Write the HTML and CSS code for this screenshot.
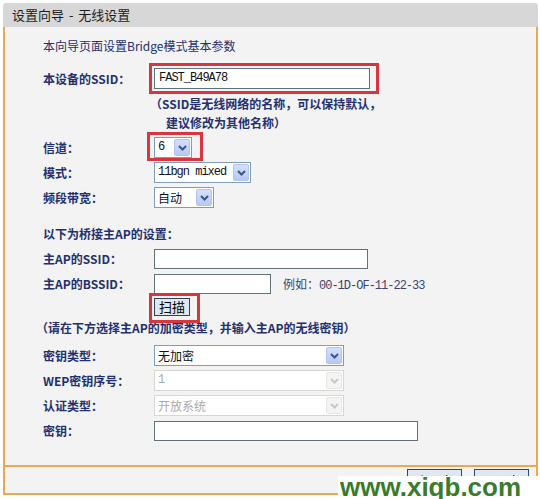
FILE: index.html
```html
<!DOCTYPE html>
<html lang="zh-CN">
<head>
  <meta charset="UTF-8">
  <title>设置向导 - 无线设置</title>
  <link rel="stylesheet" href="styles.css">
</head>
<body>
  <div class="wizard">
    <div class="wizard-title">设置向导 - 无线设置</div>

    <div class="wizard-body">
      <p class="intro">本向导页面设置Bridge模式基本参数</p>

      <div class="row row-tall">
        <span class="lbl">本设备的SSID：</span>
        <span class="hl hl-ssid"><span class="field val w216">FAST_B49A78</span></span>
      </div>
      <div class="hint">（SSID是无线网络的名称，可以保持默认，</div>
      <div class="hint hint-2">建议修改为其他名称）</div>

      <div class="group">
        <div class="row">
          <span class="lbl">信道：</span>
          <span class="hl hl-chan">
            <span class="sel w38"><span class="sel-text val">6</span><span class="sel-arrow"><svg width="9" height="6" viewBox="0 0 9 6"><path d="M1 1l3.5 3.5L8 1" fill="none" stroke="#3d5488" stroke-width="2"/></svg></span></span>
          </span>
        </div>
        <div class="row">
          <span class="lbl">模式：</span>
          <span class="sel w97"><span class="sel-text val">11bgn mixed</span><span class="sel-arrow"><svg width="9" height="6" viewBox="0 0 9 6"><path d="M1 1l3.5 3.5L8 1" fill="none" stroke="#3d5488" stroke-width="2"/></svg></span></span>
        </div>
        <div class="row">
          <span class="lbl">频段带宽：</span>
          <span class="sel w60"><span class="sel-text">自动</span><span class="sel-arrow"><svg width="9" height="6" viewBox="0 0 9 6"><path d="M1 1l3.5 3.5L8 1" fill="none" stroke="#3d5488" stroke-width="2"/></svg></span></span>
        </div>
      </div>

      <div class="group group-ap">
        <div class="row"><span class="lbl">以下为桥接主AP的设置：</span></div>
        <div class="row">
          <span class="lbl">主AP的SSID：</span>
          <span class="field w214"></span>
        </div>
        <div class="row">
          <span class="lbl">主AP的BSSID：</span>
          <span class="ctl-line">
            <span class="field w117"></span>
            <span class="example">例如：<span class="val">00-1D-OF-11-22-33</span></span>
          </span>
        </div>
        <div class="row row-btn">
          <span></span>
          <span class="hl hl-scan"><button class="btn-scan" type="button">扫描</button></span>
        </div>
        <div class="note">（请在下方选择主AP的加密类型，并输入主AP的无线密钥）</div>
      </div>

      <div class="group group-key">
        <div class="row">
          <span class="lbl">密钥类型：</span>
          <span class="sel w190"><span class="sel-text">无加密</span><span class="sel-arrow"><svg width="9" height="6" viewBox="0 0 9 6"><path d="M1 1l3.5 3.5L8 1" fill="none" stroke="#3d5488" stroke-width="2"/></svg></span></span>
        </div>
        <div class="row">
          <span class="lbl">WEP密钥序号：</span>
          <span class="sel sel-off w190"><span class="sel-text val">1</span><span class="sel-arrow"><svg width="9" height="6" viewBox="0 0 9 6"><path d="M1 1l3.5 3.5L8 1" fill="none" stroke="#c4c8cc" stroke-width="2"/></svg></span></span>
        </div>
        <div class="row">
          <span class="lbl">认证类型：</span>
          <span class="sel sel-off w190"><span class="sel-text">开放系统</span><span class="sel-arrow"><svg width="9" height="6" viewBox="0 0 9 6"><path d="M1 1l3.5 3.5L8 1" fill="none" stroke="#c4c8cc" stroke-width="2"/></svg></span></span>
        </div>
        <div class="row">
          <span class="lbl">密钥：</span>
          <span class="field w264"></span>
        </div>
      </div>
    </div>

    <div class="wizard-foot">
      <button class="btn-step" type="button">上一步</button>
      <button class="btn-step" type="button">下一步</button>
    </div>
  </div>

  <div class="watermark">www.xiqb.com</div>
</body>
</html>
```

FILE: styles.css
```css
body {
  margin: 0;
  background: #fff;
  font-family: "Noto Sans CJK SC", sans-serif;
  font-size: 12px;
  color: #24306e;
  position: relative;
  height: 499px;
  overflow: hidden;
}

.val {
  font-family: "Liberation Mono", "Noto Sans CJK SC", monospace;
  font-size: 12px;
  letter-spacing: -1px;
}

.wizard {
  margin: 3px 2px 0 3px;
}

.wizard-title {
  height: 24px;
  line-height: 24px;
  padding-left: 9px;
  background: #d7d7d7;
  border-radius: 3px 3px 0 0;
  font-size: 13px;
  color: #1b1b1b;
  word-spacing: 2px;
}

.wizard-body {
  background: #f3f3f3;
  border: 2px solid #eaa852;
  border-top: 0;
  padding: 9px 0 22px 38px;
}

.intro {
  margin: 0;
  line-height: 20px;
}

.row {
  display: grid;
  grid-template-columns: 111px auto;
  align-items: center;
  height: 25px;
}

.row-tall {
  height: 32px;
  margin-top: 6px;
}

.lbl {
  font-weight: bold;
  white-space: nowrap;
}

.hint {
  line-height: 19px;
  padding-left: 107px;
  font-weight: bold;
}

.hint-2 {
  padding-left: 123px;
}

.group {
  margin-top: 3px;
}

.group-ap {
  margin-top: 11px;
}

.group-key {
  margin-top: 5px;
}

.field {
  display: block;
  box-sizing: border-box;
  height: 20px;
  line-height: 18px;
  padding-left: 4px;
  background: #fff;
  border: 1px solid #5d7379;
  color: #111;
}

.w117 { width: 117px; }
.w214 { width: 214px; }
.w216 { width: 216px; height: 21px; }
.w264 { width: 264px; }
.w38 { width: 38px; }
.w60 { width: 60px; }
.w97 { width: 97px; }
.w190 { width: 190px; }

.sel {
  display: flex;
  box-sizing: border-box;
  height: 21px;
  background: #fff;
  border: 1px solid #7f9db9;
  color: #111;
}

.sel-text {
  flex: 1;
  padding-left: 3px;
  line-height: 19px;
  white-space: nowrap;
  overflow: hidden;
}

.sel-arrow {
  display: flex;
  align-items: center;
  justify-content: center;
  width: 16px;
  margin: 1px;
  border-radius: 2px;
  background: linear-gradient(#d4e0fb, #b7c9f4);
  border: 1px solid #b3c5ee;
  box-sizing: border-box;
}

.sel-off {
  border-color: #d6d6d2;
  color: #a9a9a9;
}

.sel-off .sel-arrow {
  background: #f4f4f2;
  border-color: #e6e6e2;
}

.ctl-line {
  display: flex;
  align-items: center;
  gap: 12px;
}

.example {
  color: #3a4470;
}

.row-btn {
  height: 21px;
}

.btn-scan {
  display: block;
  width: 36px;
  height: 18px;
  padding: 0;
  font-family: "Noto Sans CJK SC", sans-serif;
  font-size: 13px;
  line-height: 16px;
  color: #000;
  background: #dfe8f0;
  border: 1px solid #33424f;
}

.note {
  line-height: 21px;
  margin-left: -7px;
  font-weight: bold;
}

.hl {
  position: relative;
  display: block;
  width: max-content;
}

.hl::after {
  content: "";
  position: absolute;
  border: 3px solid #d8353e;
}

.hl-ssid::after { inset: -5px -9px -5px -5px; }
.hl-chan::after { inset: -5px -11px -3px -7px; }
.hl-scan::after { inset: -5px -10px -7px -5px; }

.wizard-foot {
  display: flex;
  justify-content: flex-end;
  gap: 12px;
  height: 28px;
  padding: 2px 7px 0 0;
  box-sizing: border-box;
  background: #f3f3f3;
  border: 2px solid #eaa852;
  border-top: 0;
}

.btn-step {
  width: 55px;
  height: 22px;
  font-family: "Noto Sans CJK SC", sans-serif;
  font-size: 12px;
  background: #dfe8f0;
  border: 1px solid #2f4a72;
}

.watermark {
  position: absolute;
  right: 0;
  bottom: 0;
  width: 202px;
  height: 23px;
  background: #fff;
  color: #3b7b2c;
  font-family: "Liberation Sans", sans-serif;
  font-weight: bold;
  font-size: 26px;
  line-height: 22px;
  padding-left: 2px;
  box-sizing: border-box;
}
```
